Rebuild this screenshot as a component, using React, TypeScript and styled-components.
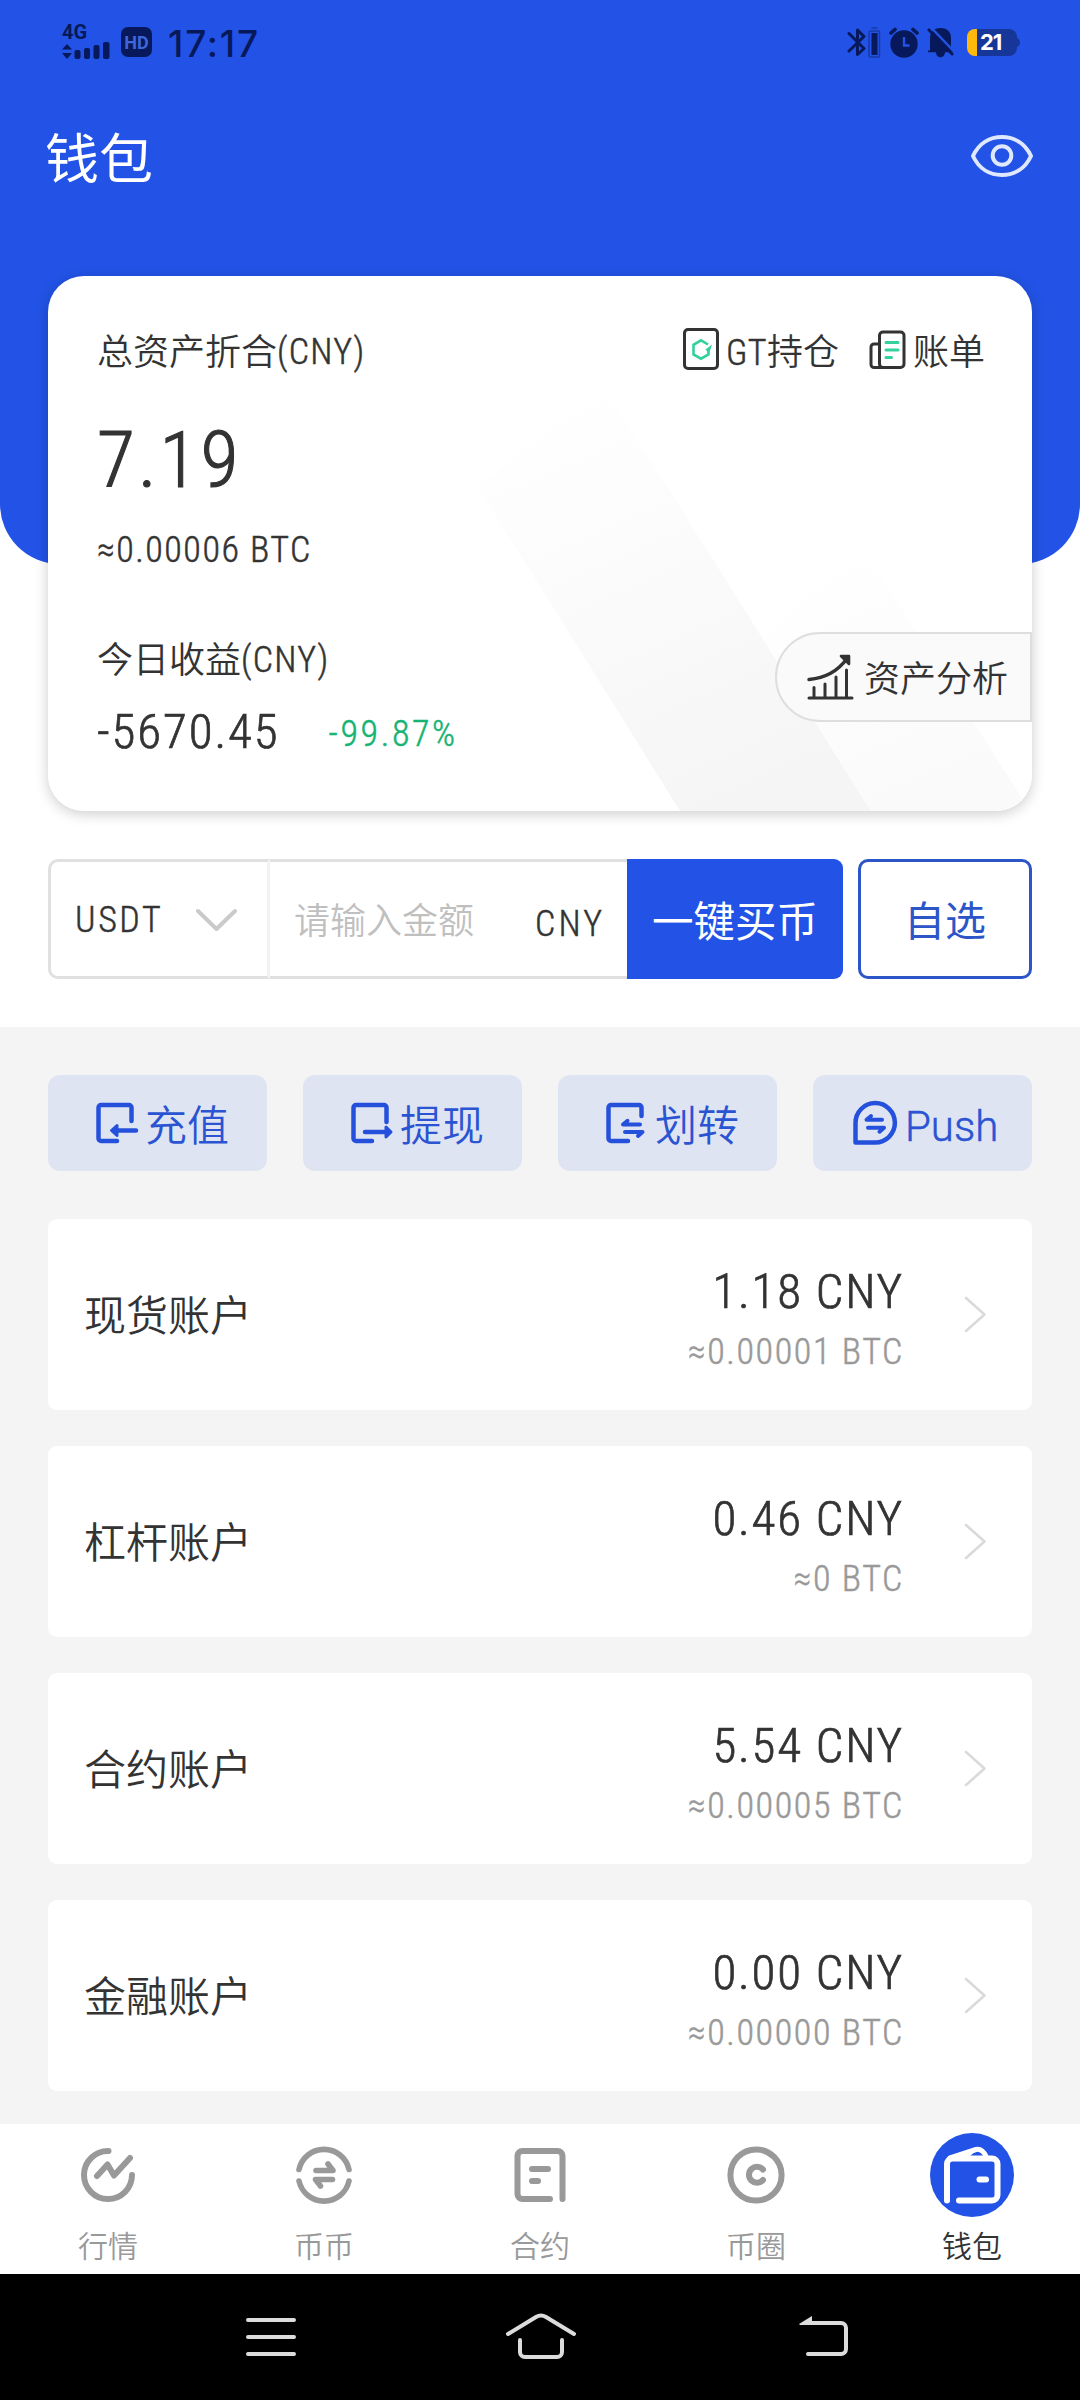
import React from 'react';
import styled, { createGlobalStyle } from 'styled-components';

const BLUE = '#2253e6';
const INK = '#333333';
const NAVY = '#07195a';

const GlobalStyle = createGlobalStyle`
  * { box-sizing: border-box; }
  body { margin: 0; background: #f4f4f4; }
  svg { display: block; flex: none; }
`;

const Screen = styled.div`
  width: 1080px;
  height: 2400px;
  display: flex;
  flex-direction: column;
  background: #f4f4f4;
  color: ${INK};
  font-family: Roboto, 'Noto Sans CJK SC', sans-serif;
  font-weight: 350;
  overflow: hidden;
`;

const Top = styled.section`
  height: 1027px;
  flex: none;
  background: #fff;
`;

const Hero = styled.header`
  height: 564px;
  padding: 0 48px;
  background: ${BLUE};
  border-radius: 0 0 60px 60px;
`;

const StatusBar = styled.div`
  height: 84px;
  display: flex;
  justify-content: space-between;
  align-items: center;
  padding: 0 12px 0 14px;
  color: ${NAVY};
`;

const StatusGroup = styled.div<{ $gap: number }>`
  display: flex;
  align-items: center;
  gap: ${(p) => p.$gap}px;
`;

const Signal = styled.div`
  width: 49px;
  height: 36px;
  display: flex;
  flex-direction: column;
  justify-content: space-between;
`;

const Network = styled.span`
  font: 700 20px/16px Roboto, sans-serif;
`;

const HdBadge = styled.span`
  width: 31px;
  height: 30px;
  margin-left: 10px;
  border-radius: 7px;
  background: ${NAVY};
  color: #3f66dc;
  font: 700 18px/31px Roboto, sans-serif;
  text-align: center;
`;

const Clock = styled.span`
  margin-left: 16px;
  font: 500 37px/40px Inter, sans-serif;
  letter-spacing: 1.8px;
  padding-top: 4px;
`;

const Battery = styled.div`
  width: 50px;
  height: 27px;
  margin-left: 12px;
  border-radius: 8px;
  background: linear-gradient(90deg, #ffb90a 0 10px, #17369a 10px);
  color: #fff;
  font: 700 22px/27px Inter, sans-serif;
  padding-left: 13px;
  letter-spacing: -1px;
`;

const TitleRow = styled.div`
  height: 192px;
  display: flex;
  justify-content: space-between;
  align-items: flex-start;
`;

const Title = styled.h1`
  margin: 37px 0 0 -3px;
  color: #fff;
  font-size: 54px;
  line-height: 80px;
  font-weight: 400;
`;

const EyeButton = styled.div`
  margin: 50px -2px 0 0;
`;

const CardShadow = styled.div`
  border-radius: 36px;
  box-shadow: 0 3px 14px rgba(0, 0, 0, 0.2);
`;

const AssetCard = styled.div`
  height: 535px;
  position: relative;
  border-radius: 36px;
  background: #fff;
  padding: 52px 48px 0 49px;
  overflow: hidden;
`;

const Bands = styled.svg`
  position: absolute;
  left: 0;
  top: 0;
`;

const CardBody = styled.div`
  position: relative;
  display: flex;
  flex-direction: column;
`;

const Line = styled.div<{ $h: number; $mt?: number }>`
  display: flex;
  align-items: center;
  height: ${(p) => p.$h}px;
  margin-top: ${(p) => p.$mt || 0}px;
`;

const Label = styled.span<{ $size?: number; $color?: string }>`
  font-size: ${(p) => p.$size || 36}px;
  line-height: 1.4;
  color: ${(p) => p.$color || 'inherit'};
  white-space: nowrap;
`;

const Latin = styled.span<{ $size?: number; $track?: number; $color?: string; $wide?: boolean; $stem?: number }>`
  font-size: ${(p) => p.$size || 36}px;
  line-height: 1.2;
  letter-spacing: ${(p) => p.$track || 0}px;
  color: ${(p) => p.$color || 'inherit'};
  font-weight: 300;
  font-stretch: ${(p) => (p.$wide ? 100 : 87)}%;
  -webkit-text-stroke: ${(p) => p.$stem || 0.5}px currentColor;
  white-space: nowrap;
`;

const Links = styled.div`
  display: flex;
  align-items: center;
  margin: 0 -1px 0 auto;
  gap: 30px;
`;

const CardLink = styled.div`
  display: flex;
  align-items: center;
  gap: 7px;

  svg {
    margin-top: -9px;
  }
`;

const Change = styled.div`
  margin-left: 49px;
  padding-top: 6px;
`;

const AnalysisButton = styled.div`
  position: absolute;
  right: 0;
  top: 356px;
  width: 257px;
  height: 90px;
  display: flex;
  align-items: center;
  gap: 10px;
  padding-left: 29px;
  border: 2px solid #dedede;
  border-radius: 45px 0 0 45px;
  background: rgba(249, 249, 249, 0.9);

  span {
    padding-top: 7px;
  }
`;

const BuyRow = styled.div`
  display: flex;
  height: 120px;
  margin: 295px 48px 0;
`;

const CoinSelect = styled.div`
  width: 222px;
  display: flex;
  align-items: center;
  justify-content: space-between;
  padding: 4px 30px 0 24px;
  border: 3px solid #e0e0e0;
  border-right-color: #f2f2f2;
  border-radius: 10px 0 0 10px;
`;

const AmountField = styled.div`
  width: 357px;
  display: flex;
  align-items: center;
  justify-content: space-between;
  padding: 6px 22px 0 24px;
  border: solid #e0e0e0;
  border-width: 3px 0;
`;

const Currency = styled.div`
  padding-top: 5px;
`;

const BuyButton = styled.div`
  width: 216px;
  height: 120px;
  border-radius: 0 9px 9px 0;
  background: ${BLUE};
  color: #fff;
  text-align: center;
  font-size: 41.500px;
  font-weight: 400;
  line-height: 127px;
`;

const PickButton = styled.div`
  width: 174px;
  height: 120px;
  margin-left: 15px;
  border: 3px solid #2c56c8;
  border-radius: 10px;
  color: #2c56c8;
  text-align: center;
  font-size: 41px;
  font-weight: 400;
  line-height: 121px;
`;

const Actions = styled.div`
  display: grid;
  grid-template-columns: repeat(4, 219px);
  gap: 36px;
  padding: 48px 48px 0;
`;

const Action = styled.div<{ $inset: number; $gap: number }>`
  height: 96px;
  display: flex;
  align-items: center;
  gap: ${(p) => p.$gap}px;
  padding-left: ${(p) => p.$inset}px;
  border-radius: 12px;
  background: #dfe4f2;
  color: #2a54d2;

  span {
    padding-top: 8px;
  }
`;

const Accounts = styled.div`
  flex: 1;
  display: flex;
  flex-direction: column;
  gap: 36px;
  padding: 48px 48px 0;
`;

const Account = styled.div`
  height: 191px;
  display: flex;
  align-items: center;
  padding: 0 45px 0 36px;
  border-radius: 9px;
  background: #fff;
`;

const AccountName = styled.div`
  padding-top: 6px;
`;

const Amounts = styled.div`
  flex: 1;
  display: flex;
  flex-direction: column;
  align-items: flex-end;
  margin-right: 60px;
  padding-top: 16px;
`;

const Value = styled.div`
  height: 60px;
  display: flex;
  align-items: center;
`;

const TabBar = styled.nav`
  height: 150px;
  flex: none;
  display: grid;
  grid-template-columns: repeat(5, 1fr);
  background: #fff;
`;

const Tab = styled.div<{ $active?: boolean }>`
  display: flex;
  flex-direction: column;
  align-items: center;
  gap: 9px;
  padding-top: 9px;
  color: ${(p) => (p.$active ? INK : '#999')};
`;

const TabIcon = styled.div`
  height: 84px;
  display: flex;
  align-items: center;
`;

const SystemNav = styled.div`
  height: 126px;
  flex: none;
  display: flex;
  align-items: center;
  justify-content: space-between;
  padding: 0 229px 0 244px;
  background: #000;
`;

const HomeKey = styled.div`
  margin-right: 13px;
`;

const stroke = (color: string, width: number) => ({
  fill: 'none',
  stroke: color,
  strokeWidth: width,
  strokeLinecap: 'round' as const,
  strokeLinejoin: 'round' as const,
});

const SignalBars = () => (
  <svg width="48" height="18" viewBox="0 0 48 18" fill={NAVY}>
    <path d="M0 7.500 5 2l5 5.500zM0 11h10l-5 6z" />
    <rect x="12.500" y="8" width="6" height="9" rx="2" />
    <rect x="22" y="6" width="6" height="11" rx="2" />
    <rect x="31.500" y="3" width="6" height="14" rx="2" />
    <rect x="41" y="0" width="6.500" height="17" rx="2" />
  </svg>
);

const Bluetooth = () => (
  <svg width="34" height="31" viewBox="0 0 34 31">
    <path d="M2 6.500 17 21.500 10.500 27.500V3L17 9.500 2 24" {...stroke(NAVY, 3)} />
    <rect x="22" y="4" width="10.500" height="26" rx="1.500" {...stroke('#173aa8', 1.500)} />
    <path d="M25 1h5" {...stroke('#173aa8', 1.500)} />
    <rect x="24.500" y="6" width="6" height="22" fill={NAVY} />
  </svg>
);

const Alarm = () => (
  <svg width="30" height="31" viewBox="0 0 30 31">
    <circle cx="15" cy="17" r="13.700" fill={NAVY} />
    <path d="M2 6 6 2.500M28 6 24 2.500" {...stroke(NAVY, 3.600)} />
    <path d="M15 10v8.500h5.500" fill="none" stroke={BLUE} strokeWidth="2.400" />
  </svg>
);

const BellOff = () => (
  <svg width="28" height="31" viewBox="0 0 28 31">
    <path d="M3 25V11C3 4 8 1 13.500 1S24 4 24 11v14z" fill={NAVY} />
    <path d="M1 23.500h25v1.700H1zM9 25h9c0 7-9 7-9 0z" fill={NAVY} />
    <path d="M3.500 0 29 26.500" stroke={BLUE} strokeWidth="2.500" />
    <path d="M1 2 26 28" stroke={NAVY} strokeWidth="2.600" />
  </svg>
);

const BatteryNub = () => (
  <svg width="3" height="9" viewBox="0 0 3 9">
    <path d="M0 0c4 1 4 8 0 9z" fill="#17369a" />
  </svg>
);

const Eye = () => (
  <svg width="64" height="44" viewBox="0 0 64 44">
    <path d="M3 22C9 9 20 3 32 3s23 6 29 19C55 35 44 41 32 41S9 35 3 22z" {...stroke('#dfe8ff', 4)} />
    <circle cx="32" cy="21.500" r="9.300" {...stroke('#dfe8ff', 4)} />
  </svg>
);

const GtIcon = () => (
  <svg width="36" height="42" viewBox="0 0 36 42">
    <rect x="1.500" y="1.500" width="33" height="39" rx="3.500" {...stroke(INK, 3)} />
    <path d="M25 16.500 18 12.300l-7.500 4.500v9.600l7.500 4.300 7.500-4.300V22" fill="none" stroke="#34d19b" strokeWidth="2.600" />
    <path d="M29 16.500 27 23l-2 1.500-2.500-3z" fill="#34d19b" />
  </svg>
);

const BillIcon = () => (
  <svg width="37" height="42" viewBox="0 0 37 42">
    <rect x="10.500" y="4" width="24.500" height="35.500" rx="3.500" {...stroke(INK, 3)} />
    <path d="M10.500 16H5a3 3 0 0 0-3 3v17.500a3 3 0 0 0 3 3h8" {...stroke(INK, 3)} />
    <path d="M17 14.500h12M17 22h12M17 29.500h5.500" {...stroke('#34d19b', 3)} />
  </svg>
);

const AnalysisIcon = () => (
  <svg width="48" height="48" viewBox="0 0 48 48">
    <path d="M3 45h43M8 45V34.500M19 45V31M30 45V24M40.500 45V17" {...stroke(INK, 3)} />
    <path d="M3 26.500C20 25 32 18 41 5.500" {...stroke(INK, 3.400)} />
    <path d="M35 3h8v8z" fill={INK} stroke={INK} strokeWidth="2.600" strokeLinejoin="round" />
  </svg>
);

const DownChevron = () => (
  <svg width="42" height="26" viewBox="0 0 42 26">
    <path d="M3 3 21.500 21 40 3" {...stroke('#cacaca', 4)} />
  </svg>
);

const RightChevron = () => (
  <svg width="23" height="37" viewBox="0 0 23 37">
    <path d="M2 2 20.500 18.500 2 35" {...stroke('#dadada', 2.600)} />
  </svg>
);

const actionStroke = stroke('#2450dc', 4.500);

const DepositIcon = () => (
  <svg width="48" height="48" viewBox="0 0 48 48">
    <path d="M24 42H8a2.500 2.500 0 0 1-2.500-2.500V8.500A2.500 2.500 0 0 1 8 6h28a2.500 2.500 0 0 1 2.500 2.500V22M43 31.500H21" {...actionStroke} />
    <path d="M18.500 31.500 24 26.500v10z" {...actionStroke} strokeWidth={3} fill="#2450dc" />
  </svg>
);

const WithdrawIcon = () => (
  <svg width="48" height="48" viewBox="0 0 48 48">
    <path d="M24 42H8a2.500 2.500 0 0 1-2.500-2.500V8.500A2.500 2.500 0 0 1 8 6h28a2.500 2.500 0 0 1 2.500 2.500V23M17 33h22" {...actionStroke} />
    <path d="M43 33 38 28v10z" {...actionStroke} strokeWidth={3} fill="#2450dc" />
  </svg>
);

const TransferIcon = () => (
  <svg width="48" height="48" viewBox="0 0 48 48">
    <path d="M25 42H8a2.500 2.500 0 0 1-2.500-2.500V8.500A2.500 2.500 0 0 1 8 6h28a2.500 2.500 0 0 1 2.500 2.500V17" {...actionStroke} />
    <path d="M37 25.500H20l4.500-3.700M22 33h17.500l-4.500 4" {...actionStroke} strokeWidth={4} />
  </svg>
);

const PushIcon = () => (
  <svg width="48" height="48" viewBox="0 0 48 48">
    <path d="M4.500 43.500V24A19.700 19.700 0 1 1 24 43.500z" {...actionStroke} />
    <path d="M31 20.700H15.500l4.500-3.700M17 28.700h16l-4.500 4" {...actionStroke} strokeWidth={4} />
  </svg>
);

const tabStroke = stroke('#999', 6);

const MarketIcon = () => (
  <svg width="60" height="60" viewBox="0 0 60 60">
    <path d="M30.500 6A24 24 0 1 0 54 30M19 31l10.500-11.500L36 30.500 52 13" {...tabStroke} />
  </svg>
);

const SpotIcon = () => (
  <svg width="60" height="60" viewBox="0 0 60 60">
    <path d="M5 24.500a25.600 25.600 0 0 1 50 0M5 36a25.600 25.600 0 0 0 50 0" {...tabStroke} strokeWidth={5.600} />
    <path d="M22 25.500h17L34 19M38.500 34.500h-17L26.500 41" {...tabStroke} strokeWidth={5.600} />
  </svg>
);

const ContractIcon = () => (
  <svg width="60" height="60" viewBox="0 0 60 60">
    <path d="M40 54H12.500A5 5 0 0 1 7.500 49V11a5 5 0 0 1 5-5h35a5 5 0 0 1 5 5v43M22 24h16M22 36h6" {...tabStroke} />
  </svg>
);

const CircleIcon = () => (
  <svg width="60" height="60" viewBox="0 0 60 60">
    <circle cx="30" cy="30" r="25.600" {...tabStroke} />
    <path d="M37 24.500a8 8 0 1 0 0 10.500" {...tabStroke} />
  </svg>
);

const WalletIcon = () => (
  <svg width="84" height="84" viewBox="0 0 84 84">
    <circle cx="42" cy="42" r="42" fill={BLUE} />
    <path d="M17 67.500V31a5.500 5.500 0 0 1 5.500-5.500h39.500a5.500 5.500 0 0 1 5.500 5.500v31a5.500 5.500 0 0 1-5.500 5.500H29" {...stroke('#fff', 6)} />
    <path d="M20 25 46 16.500q6-1.500 10.500 7.500" {...stroke('#fff', 5)} />
    <path d="M30 24 46 18l-6 5z" fill="#fff" />
    <path d="M49.500 46.500h6.500" {...stroke('#fff', 6)} />
  </svg>
);

const navStroke = stroke('#dcdcdc', 4);

const MenuIcon = () => (
  <svg width="54" height="44" viewBox="0 0 54 44">
    <path d="M4 5h46M4 22h46M4 39h46" {...navStroke} />
  </svg>
);

const HomeIcon = () => (
  <svg width="72" height="48" viewBox="0 0 72 48">
    <path d="M3 21 31 4q5-3 10 0l28 17M15 27v12a5 5 0 0 0 5 5h32a5 5 0 0 0 5-5V27" {...navStroke} />
  </svg>
);

const BackIcon = () => (
  <svg width="54" height="44" viewBox="0 0 54 44">
    <path d="M12 8h32a5 5 0 0 1 5 5v21a5 5 0 0 1-5 5H11" {...navStroke} />
    <path d="M2 9 15 1v9H3z" fill="#dcdcdc" />
  </svg>
);

const actions = [
  { label: '充值', icon: <DepositIcon /> },
  { label: '提现', icon: <WithdrawIcon /> },
  { label: '划转', icon: <TransferIcon /> },
];

const accounts = [
  { name: '现货账户', cny: '1.18 CNY', btc: '≈0.00001 BTC' },
  { name: '杠杆账户', cny: '0.46 CNY', btc: '≈0 BTC' },
  { name: '合约账户', cny: '5.54 CNY', btc: '≈0.00005 BTC' },
  { name: '金融账户', cny: '0.00 CNY', btc: '≈0.00000 BTC' },
];

const tabs = [
  { label: '行情', icon: <MarketIcon /> },
  { label: '币币', icon: <SpotIcon /> },
  { label: '合约', icon: <ContractIcon /> },
  { label: '币圈', icon: <CircleIcon /> },
  { label: '钱包', icon: <WalletIcon />, active: true },
];

export default function App() {
  return (
    <>
      <GlobalStyle />
      <Screen>
        <Top>
          <Hero>
            <StatusBar>
              <StatusGroup $gap={0}>
                <Signal>
                  <Network>4G</Network>
                  <SignalBars />
                </Signal>
                <HdBadge>HD</HdBadge>
                <Clock>17:17</Clock>
              </StatusGroup>
              <StatusGroup $gap={0}>
                <StatusGroup $gap={8}>
                  <Bluetooth />
                  <Alarm />
                  <BellOff />
                </StatusGroup>
                <Battery>21</Battery>
                <BatteryNub />
              </StatusGroup>
            </StatusBar>
            <TitleRow>
              <Title>钱包</Title>
              <EyeButton>
                <Eye />
              </EyeButton>
            </TitleRow>
            <CardShadow>
              <AssetCard>
                <Bands width="984" height="535" viewBox="0 0 984 535">
                  <defs>
                    <linearGradient id="wide" x1="0.2" y1="0" x2="0.6" y2="1">
                      <stop offset="0" stopColor="#fff" />
                      <stop offset="0.25" stopColor="#fdfdfd" />
                      <stop offset="1" stopColor="#f5f5f5" />
                    </linearGradient>
                    <linearGradient id="narrow" x1="0.2" y1="0" x2="0.6" y2="1">
                      <stop offset="0" stopColor="#fff" />
                      <stop offset="1" stopColor="#fafafa" />
                    </linearGradient>
                  </defs>
                  <path d="M554 107 823 535H632L430 211z" fill="url(#wide)" />
                  <path d="M812 267 982 535H823L717 364z" fill="url(#narrow)" />
                </Bands>
                <CardBody>
                  <Line $h={50}>
                    <Label>总资产折合</Label>
                    <Latin $track={1.2}>(CNY)</Latin>
                    <Links>
                      <CardLink>
                        <GtIcon />
                        <Label>
                          <Latin $track={0.4}>GT</Latin>持仓
                        </Label>
                      </CardLink>
                      <CardLink>
                        <BillIcon />
                        <Label>账单</Label>
                      </CardLink>
                    </Links>
                  </Line>
                  <Line $h={96} $mt={35}>
                    <Latin $size={78} $track={3} $stem={1.1}>7.19</Latin>
                  </Line>
                  <Line $h={44} $mt={20}>
                    <Latin $track={1.5}>≈0.00006 BTC</Latin>
                  </Line>
                  <Line $h={50} $mt={63}>
                    <Label>今日收益</Label>
                    <Latin $track={1.2}>(CNY)</Latin>
                  </Line>
                  <Line $h={60} $mt={16}>
                    <Latin $size={49} $track={1.9} $stem={0.7}>-5670.45</Latin>
                    <Change>
                      <Latin $track={2.6} $color="#16b373">-99.87%</Latin>
                    </Change>
                  </Line>
                </CardBody>
                <AnalysisButton>
                  <AnalysisIcon />
                  <Label>资产分析</Label>
                </AnalysisButton>
              </AssetCard>
            </CardShadow>
          </Hero>
          <BuyRow>
            <CoinSelect>
              <Latin $track={2.6}>USDT</Latin>
              <DownChevron />
            </CoinSelect>
            <AmountField>
              <Label $color="#bfbfbf">请输入金额</Label>
              <Currency>
                <Latin $track={3}>CNY</Latin>
              </Currency>
            </AmountField>
            <BuyButton>一键买币</BuyButton>
            <PickButton>自选</PickButton>
          </BuyRow>
        </Top>
        <Actions>
          {actions.map((a) => (
            <Action key={a.label} $inset={45} $gap={4}>
              {a.icon}
              <Label $size={42}>{a.label}</Label>
            </Action>
          ))}
          <Action $inset={38} $gap={6}>
            <PushIcon />
            <Latin $size={42} $wide>Push</Latin>
          </Action>
        </Actions>
        <Accounts>
          {accounts.map((a) => (
            <Account key={a.name}>
              <AccountName>
                <Label $size={42}>{a.name}</Label>
              </AccountName>
              <Amounts>
                <Value>
                  <Latin $size={49} $track={1.8} $stem={0.7}>{a.cny}</Latin>
                </Value>
                <Value>
                  <Latin $track={1.6} $color="#999">{a.btc}</Latin>
                </Value>
              </Amounts>
              <RightChevron />
            </Account>
          ))}
        </Accounts>
        <TabBar>
          {tabs.map((t) => (
            <Tab key={t.label} $active={t.active}>
              <TabIcon>{t.icon}</TabIcon>
              <Label $size={30}>{t.label}</Label>
            </Tab>
          ))}
        </TabBar>
        <SystemNav>
          <MenuIcon />
          <HomeKey>
            <HomeIcon />
          </HomeKey>
          <BackIcon />
        </SystemNav>
      </Screen>
    </>
  );
}
